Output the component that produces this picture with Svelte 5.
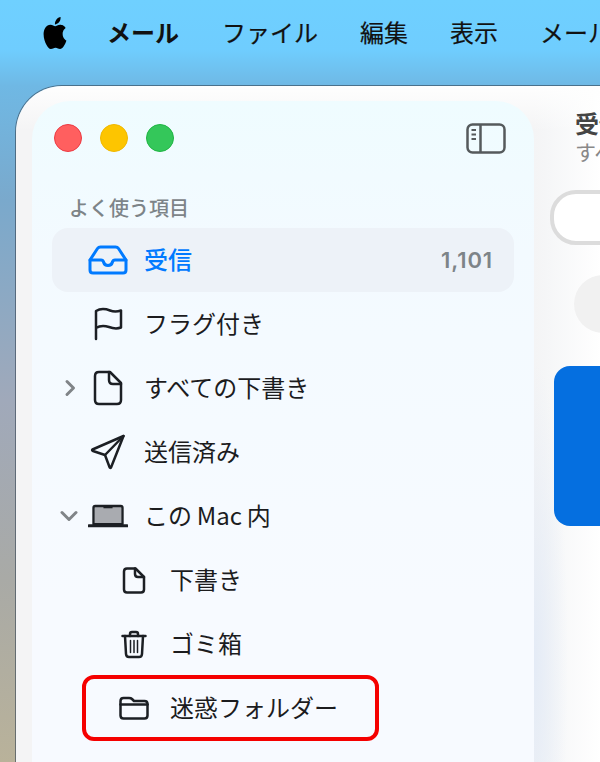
<script>
    const menus = ['ファイル', '編集', '表示', 'メールボックス']

    const rows = [
        { label: 'フラグ付き', icon: 'flag' },
        { label: 'すべての下書き', icon: 'doc', chevron: 'right' },
        { label: '送信済み', icon: 'send' },
        { label: 'この\u2009Mac\u2009内', icon: 'laptop', chevron: 'down' },
        { label: '下書き', icon: 'doc-small', nested: true },
        { label: 'ゴミ箱', icon: 'trash', nested: true },
        { label: '迷惑フォルダー', icon: 'folder', nested: true, marked: true }
    ]
</script>

{#snippet icon(name)}
    {#if name === 'inbox'}
        <svg width="40" height="30" viewBox="0 0 40 30" class="blue">
            <path d="M2 15 9.500 3.500Q10.500 2 12.500 2H27.500Q29.500 2 30.500 3.500L38 15V25Q38 28 35 28H5Q2 28 2 25Z" />
            <path d="M2 15H13Q15 15 15.500 17 16.500 20.500 20 20.500 23.500 20.500 24.500 17 25 15 27 15H38" />
        </svg>
    {:else if name === 'flag'}
        <svg width="30" height="34" viewBox="0 0 30 34">
            <path d="M3 32V4C8 1 13 2 17 3.500 21 5 25 4.500 28 3.500V20.500C24 22 20 21.500 16 20 11 18.500 7 18.500 3 21" />
        </svg>
    {:else if name === 'doc'}
        <svg width="30" height="36" viewBox="0 0 30 36">
            <path d="M17 2H6Q2 2 2 6V30Q2 34 6 34H24Q28 34 28 30V13Z" />
            <path d="M16 2V10Q16 14 20 14H28" />
        </svg>
    {:else if name === 'send'}
        <svg width="36" height="36" viewBox="0 0 36 36">
            <path d="M33.500 2 2.500 15.500Q1.500 16.500 3 17L15 21 19.500 33Q20 34.500 21 33.500Z" />
            <path d="M33.500 2 15 21" />
        </svg>
    {:else if name === 'laptop'}
        <svg width="44" height="26" viewBox="0 0 44 26">
            <path class="screen" d="M6 22V4Q6 2 8 2H36Q38 2 38 4V22Z" />
            <path d="M17 2.500H27V4.500H17Z" class="notch" />
            <path d="M1 23.800H43" stroke-width="3.400" />
        </svg>
    {:else if name === 'doc-small'}
        <svg width="24" height="27" viewBox="0 0 24 27">
            <path d="M13.500 1.500H5Q2 1.500 2 4.500V22.500Q2 25.500 5 25.500H19Q22 25.500 22 22.500V10Z" />
            <path d="M13 1.500V7Q13 10 16 10H22" />
        </svg>
    {:else if name === 'trash'}
        <svg width="26" height="29" viewBox="0 0 26 29">
            <path d="M1.500 6H24.500" />
            <path d="M9 6V4Q9 2 11 2H15Q17 2 17 4V6" />
            <path d="M4 6 5 24Q5.200 27 8 27H18Q20.800 27 21 24L22 6" />
            <path d="M9.500 10.500V22.500M13 10.500V22.500M16.500 10.500V22.500" stroke-width="1.500" />
        </svg>
    {:else if name === 'folder'}
        <svg width="30" height="24" viewBox="0 0 30 24">
            <path d="M1.500 5Q1.500 2 4.500 2H10Q12 2 13 3L15 5H25.500Q28.500 5 28.500 8V19.500Q28.500 22.500 25.500 22.500H4.500Q1.500 22.500 1.500 19.500Z" />
            <path d="M1.500 8.500H28.500" />
        </svg>
    {/if}
{/snippet}

<div class="desktop">
    <header class="menubar">
        <svg class="apple" width="28" height="32" viewBox="0 0 24 24" preserveAspectRatio="none">
            <path d="M12.152 6.896c-.948 0-2.415-1.078-3.96-1.04-2.04.027-3.91 1.183-4.961 3.014-2.117 3.675-.546 9.103 1.519 12.09 1.013 1.454 2.208 3.09 3.792 3.039 1.52-.065 2.09-.987 3.935-.987 1.831 0 2.35.987 3.96.948 1.637-.026 2.676-1.48 3.676-2.948 1.156-1.688 1.636-3.325 1.662-3.415-.039-.013-3.182-1.221-3.22-4.857-.026-3.04 2.48-4.494 2.597-4.559-1.429-2.09-3.623-2.324-4.39-2.376-2-.156-3.675 1.09-4.61 1.09zM15.53 3.83c.843-1.012 1.4-2.427 1.245-3.83-1.207.052-2.662.805-3.532 1.818-.78.896-1.454 2.338-1.273 3.714 1.338.104 2.715-.688 3.559-1.701" />
        </svg>
        <span class="app-name">メール</span>
        {#each menus as menu}
            <span class="menu">{menu}</span>
        {/each}
    </header>

    <div class="window">
        <aside class="sidebar">
            <div class="titlebar">
                <span class="light red"></span>
                <span class="light yellow"></span>
                <span class="light green"></span>
                <svg class="toggle" width="40" height="31" viewBox="0 0 40 31">
                    <rect x="1.500" y="1.500" width="37" height="28" rx="5" />
                    <path d="M14.500 1.500V29.500" />
                    <path d="M5.500 7H10M5.500 11.500H10M5.500 16H10" stroke-width="2" />
                </svg>
            </div>

            <h2 class="section">よく使う項目</h2>

            <nav>
                <div class="row selected">
                    <span class="chevron"></span>
                    <span class="icon">{@render icon('inbox')}</span>
                    <span class="label">受信</span>
                    <span class="count">1,101</span>
                </div>
                {#each rows as row}
                    <div class="row" class:nested={row.nested} class:marked={row.marked}>
                        <span class="chevron">
                            {#if row.chevron === 'right'}
                                <svg width="12" height="18" viewBox="0 0 12 18"><path d="M3 2.500 9.500 9 3 15.500" /></svg>
                            {:else if row.chevron === 'down'}
                                <svg class="down" width="18" height="12" viewBox="0 0 18 12"><path d="M2 2.500 9 9.500 16 2.500" /></svg>
                            {/if}
                        </span>
                        <span class="icon">{@render icon(row.icon)}</span>
                        <span class="label">{row.label}</span>
                    </div>
                {/each}
            </nav>
        </aside>

        <main class="content">
            <div class="heading">
                <strong>受信</strong>
                <span>すべてのアカウント</span>
            </div>
            <div class="search"></div>
            <div class="avatar"></div>
            <div class="card"></div>
        </main>
    </div>
</div>

<style>
    :global(body) {
        margin: 0;
        overflow: hidden;
    }

    .desktop {
        width: 600px;
        height: 762px;
        display: flex;
        flex-direction: column;
        overflow: hidden;
        font-family: "Noto Sans CJK JP", "Inter", sans-serif;
        background: linear-gradient(180deg, #6fd0ff 0, #6fcdfe 50px, #6fb8e4 86px, #7aa9cc 200px, #a0a9ba 400px, #a9aaa6 580px, #b9b29a 762px);
    }

    .menubar {
        height: 66px;
        flex: none;
        box-sizing: border-box;
        padding: 0 0 4px 41px;
        display: flex;
        align-items: center;
        color: #111;
        font-size: 24px;
        white-space: nowrap;
    }

    .apple {
        flex: none;
        fill: #000;
        margin: 3px 38px 0 0;
    }

    .app-name {
        font-weight: 700;
        margin-right: 43px;
    }

    .menu {
        margin-right: 42px;
        -webkit-text-stroke: 0.2px #111;
    }

    .window {
        flex: 1;
        margin: 20px -60px 0 16px;
        padding: 15px 0 0 16px;
        display: flex;
        border-radius: 46px 46px 0 0;
        background:
            linear-gradient(180deg, #fefefe 0, rgba(255, 255, 255, 0) 45px),
            linear-gradient(90deg, #f4f4f5 0, #f4f4f5 518px, #f5f6f7 530px, #fff 585px);
        box-shadow: 0 0 0 1px rgba(50, 65, 80, 0.6);
    }

    .sidebar {
        width: 502px;
        flex: none;
        padding: 0 20px;
        box-sizing: border-box;
        border-radius: 38px 38px 0 0;
        background: linear-gradient(180deg, #effcff 0, #f3faff 150px, #f7faff 500px);
    }

    .titlebar {
        height: 74px;
        display: flex;
        align-items: center;
        gap: 18px;
        padding: 0 8px 0 2px;
    }

    .light {
        width: 28px;
        height: 28px;
        box-sizing: border-box;
        border-radius: 50%;
        border: 1px solid;
    }

    .red { background: #ff5f5f; border-color: #ec3a43; }
    .yellow { background: #fdc500; border-color: #f0b800; }
    .green { background: #34c75a; border-color: #1fb543; }

    .toggle {
        margin-left: auto;
        fill: none;
        stroke: #555a5c;
        stroke-width: 2.500;
    }

    .section {
        margin: 20px 0 0 17px;
        height: 33px;
        font-size: 20px;
        line-height: 26px;
        font-weight: 500;
        color: #7d8488;
    }

    .row {
        height: 64px;
        display: flex;
        align-items: center;
        position: relative;
        font-size: 24px;
        color: #1c1c1e;
    }

    .row.selected {
        border-radius: 16px;
        background: #edf2f8;
        color: #007aff;
        font-weight: 500;
    }

    .row.nested {
        padding-left: 26px;
    }

    .row.marked::after {
        content: "";
        position: absolute;
        left: 30px;
        right: 135px;
        top: -1px;
        bottom: -1px;
        border: 4px solid #f50000;
        border-radius: 12px;
    }

    .chevron {
        width: 36px;
        flex: none;
        display: flex;
        justify-content: center;
    }

    .chevron svg {
        fill: none;
        stroke: #808488;
        stroke-width: 3;
        stroke-linecap: round;
        stroke-linejoin: round;
    }

    .chevron svg.down {
        margin-left: -3px;
    }

    .icon {
        width: 40px;
        flex: none;
        display: flex;
        justify-content: center;
    }

    .icon :global(svg) {
        fill: none;
        stroke: #1c1f24;
        stroke-width: 2.500;
        stroke-linecap: round;
        stroke-linejoin: round;
    }

    .icon :global(svg.blue) {
        stroke: #007aff;
        stroke-width: 3;
    }

    .icon :global(.screen) {
        fill: #a9abb0;
    }

    .icon :global(.notch) {
        fill: #1c1f24;
        stroke: none;
    }

    .label {
        margin: 0 0 3px 16px;
    }

    .count {
        margin-left: auto;
        padding-right: 21px;
        font-family: "Inter", sans-serif;
        font-size: 22px;
        font-weight: 600;
        letter-spacing: 0.9px;
        color: #7d8488;
    }

    .content {
        flex: 1;
        display: flex;
        flex-direction: column;
        align-items: flex-start;
        background: radial-gradient(ellipse 34px 300px at 0 560px, #e4ebf6, rgba(228, 235, 246, 0));
    }

    .heading {
        height: 74px;
        box-sizing: border-box;
        padding: 7px 0 0 41px;
        display: flex;
        flex-direction: column;
        font-size: 24px;
        line-height: 30px;
        white-space: nowrap;
        color: #444;
    }

    .heading span {
        font-size: 21px;
        line-height: 26px;
        color: #888;
    }

    .search {
        margin: 15px 0 0 16px;
        width: 200px;
        height: 55px;
        box-sizing: border-box;
        border: 4px solid #dcdcdc;
        border-radius: 26px;
        background: #fff;
    }

    .avatar {
        margin: 30px 0 0 40px;
        width: 58px;
        height: 58px;
        border-radius: 50%;
        background: #f1f1f1;
    }

    .card {
        margin: 33px 0 0 20px;
        width: 200px;
        height: 160px;
        border-radius: 16px;
        background: #056fe0;
    }
</style>
